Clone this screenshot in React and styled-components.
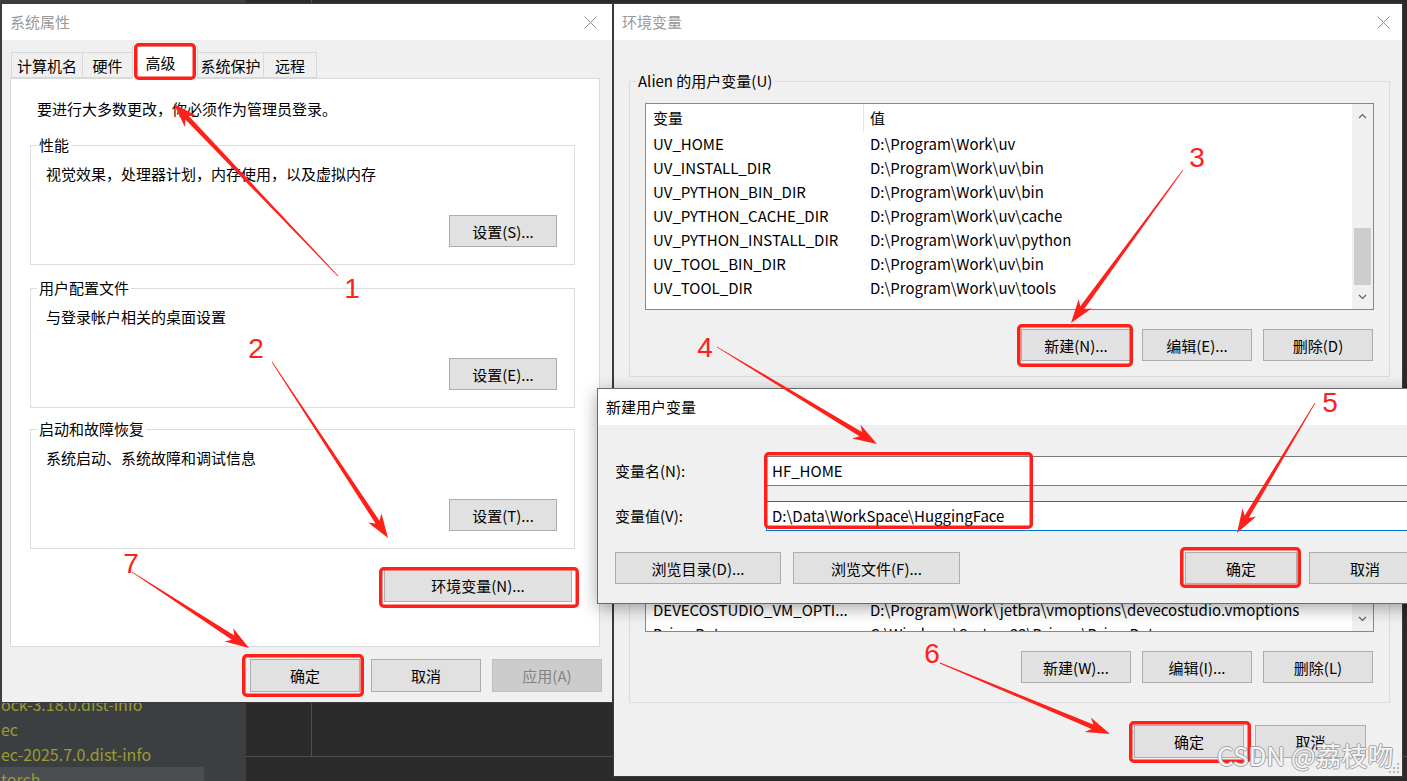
import React from 'react';
import styled, { createGlobalStyle } from 'styled-components';

const GlobalStyle = createGlobalStyle`
    html, body {
        margin: 0;
        padding: 0;
        background: #2b2b2b;
    }
    body {
        font-family: "Noto Sans CJK SC", "Noto Sans", sans-serif;
        font-size: 15px;
        color: #000;
    }
    * {
        box-sizing: border-box;
    }
`;

const Desktop = styled.div`
    position: relative;
    width: 1407px;
    height: 781px;
    overflow: hidden;
    background: #2b2b2b;
`;

/* ---------------- IDE behind the dialogs ---------------- */

const Ide = styled.div`
    position: absolute;
    inset: 0;
    display: grid;
    grid-template-columns: 246px 1fr;
`;

const ProjectTree = styled.div`
    background: #3c3f41;
    padding-top: 692px;
    display: flex;
    flex-direction: column;
    overflow: hidden;
`;

const TreeRow = styled.div`
    height: 25px;
    line-height: 25px;
    width: ${(p) => (p.$selected ? '204px' : 'auto')};
    background: ${(p) => (p.$selected ? '#4b4e50' : 'transparent')};
    color: #9b9b30;
    font-size: 16px;
    white-space: nowrap;
    padding-left: 1px;
    flex-shrink: 0;
`;

const Editor = styled.div`
    display: flex;
    flex-direction: column;
    background: #2b2b2b;
`;

const EditorTop = styled.div`
    height: 756px;
    display: flex;
`;

const Gutter = styled.div`
    width: 66px;
    border-right: 1px solid #4f4f4f;
`;

const EditorBottom = styled.div`
    flex: 1;
    border-top: 1px solid #4f4f4f;
`;

/* ---------------- generic window parts ---------------- */

const Window = styled.div`
    position: absolute;
    left: ${(p) => p.$x}px;
    top: ${(p) => p.$y}px;
    width: ${(p) => p.$w}px;
    height: ${(p) => p.$h}px;
    background: #f0f0f0;
    border: 1px solid ${(p) => (p.$active ? '#6a6a6a' : '#3a3a3a')};
    box-shadow: ${(p) => (p.$active ? '0 4px 16px rgba(0, 0, 0, 0.35)' : 'none')};
    display: flex;
    flex-direction: column;
    overflow: hidden;
`;

const TitleBar = styled.div`
    height: 36px;
    flex-shrink: 0;
    background: #fff;
    display: flex;
    align-items: center;
    justify-content: space-between;
    padding: 0 ${(p) => p.$pr || 14}px 0 8px;
    color: ${(p) => (p.$active ? '#000' : '#999')};
    line-height: 20px;
`;

const Body = styled.div`
    flex: 1;
    display: flex;
    flex-direction: column;
    padding: ${(p) => p.$pad};
`;

const ButtonRow = styled.div`
    display: flex;
    justify-content: flex-end;
    gap: ${(p) => p.$gap || 11}px;
    margin-top: ${(p) => p.$mt || 0}px;
    margin-right: ${(p) => p.$mr || 0}px;
`;

const Button = styled.button`
    width: ${(p) => p.$w}px;
    height: ${(p) => p.$h || 32}px;
    flex-shrink: 0;
    padding: 0;
    background: #e1e1e1;
    border: 1px solid #adadad;
    font-family: inherit;
    font-size: 15px;
    color: #000;

    &:disabled {
        background: #cccccc;
        border-color: #bfbfbf;
        color: #838383;
    }
`;

const Group = styled.fieldset`
    margin: ${(p) => p.$mt || 0}px 0 0 0;
    min-width: 0;
    border: 1px solid #dcdcdc;
    padding: ${(p) => p.$pad};
    display: flex;
    flex-direction: column;
`;

const Legend = styled.legend`
    padding: 0 2px;
    margin-left: -9px;
    line-height: 20px;
`;

const Line = styled.div`
    line-height: 20px;
    margin-left: ${(p) => p.$ml || 0}px;
    white-space: nowrap;
`;

const SizeGrip = styled.svg`
    position: absolute;
    right: 2px;
    bottom: 2px;
`;

const CloseIcon = () => (
    <svg width="13" height="13" viewBox="0 0 13 13">
        <path d="M0.5 0.5L12.5 12.5M12.5 0.5L0.5 12.5" stroke="#8c8c8c" strokeWidth="1" />
    </svg>
);

const Grip = () => (
    <SizeGrip width="11" height="11" viewBox="0 0 11 11">
        {[
            [8, 0],
            [8, 4],
            [4, 4],
            [8, 8],
            [4, 8],
            [0, 8],
        ].map(([x, y]) => (
            <rect key={`${x}-${y}`} x={x} y={y} width="2" height="2" fill="#b8b8b8" />
        ))}
    </SizeGrip>
);

/* ---------------- system properties ---------------- */

const TabStrip = styled.div`
    height: 32px;
    display: flex;
    align-items: flex-end;
    padding-left: 1px;
`;

const Tab = styled.div`
    width: ${(p) => p.$w}px;
    height: ${(p) => (p.$active ? 33 : 26)}px;
    margin-left: -1px;
    margin-bottom: ${(p) => (p.$active ? -1 : 0)}px;
    border: 1px solid #d9d9d9;
    border-bottom: ${(p) => (p.$active ? 'none' : '1px solid #d9d9d9')};
    background: ${(p) => (p.$active ? '#fff' : '#f0f0f0')};
    position: relative;
    z-index: ${(p) => (p.$active ? 2 : 1)};
    display: flex;
    align-items: center;
    justify-content: center;
    padding-bottom: ${(p) => (p.$active ? 2 : 0)}px;
    padding-right: ${(p) => (p.$active ? 9 : 0)}px;
    padding-left: ${(p) => (p.$active ? 0 : 0)}px;
    white-space: nowrap;

    &:first-child {
        margin-left: 0;
    }
`;

const TabPanel = styled.div`
    width: 590px;
    height: 569px;
    background: #fff;
    border: 1px solid #d9d9d9;
    padding: 20px 24px 0 19px;
    display: flex;
    flex-direction: column;
`;

/* ---------------- environment variables ---------------- */

const ListBox = styled.div`
    height: 207px;
    border: 1px solid #828790;
    background: #fff;
    display: flex;
`;

const ListMain = styled.div`
    flex: 1;
    min-width: 0;
    display: flex;
    flex-direction: column;
    overflow: hidden;
`;

const ListLine = styled.div`
    display: grid;
    grid-template-columns: 218px 1fr;
    height: ${(p) => (p.$head ? 28 : 24)}px;
    line-height: ${(p) => (p.$head ? 28 : 24)}px;
    flex-shrink: 0;
`;

const Cell = styled.div`
    padding-left: ${(p) => (p.$first ? 7 : 6)}px;
    white-space: nowrap;
    overflow: hidden;
    text-overflow: ellipsis;
    border-right: ${(p) => (p.$sep ? '1px solid #e5e5e5' : 'none')};
`;

const ScrollBar = styled.div`
    width: 21px;
    background: #f0f0f0;
    display: flex;
    flex-direction: column;
`;

const ScrollArrow = styled.div`
    height: 24px;
    display: flex;
    align-items: center;
    justify-content: center;
`;

const Track = styled.div`
    flex: 1;
    display: flex;
    flex-direction: column;
    justify-content: ${(p) => p.$at};
`;

const Thumb = styled.div`
    height: 57px;
    margin: 0 2px;
    background: #cdcdcd;
`;

const Chevron = ({ up }) => (
    <svg width="9" height="6" viewBox="0 0 9 6">
        <path d={up ? 'M1 5L4.5 1.5L8 5' : 'M1 1L4.5 4.5L8 1'} stroke="#606060" strokeWidth="1.2" fill="none" />
    </svg>
);

const VarList = ({ rows, thumbAt }) => (
    <ListBox>
        <ListMain>
            <ListLine $head>
                <Cell $first $sep>变量</Cell>
                <Cell>值</Cell>
            </ListLine>
            {rows.map(([name, value]) => (
                <ListLine key={name}>
                    <Cell $first>{name}</Cell>
                    <Cell>{value}</Cell>
                </ListLine>
            ))}
        </ListMain>
        <ScrollBar>
            <ScrollArrow>
                <Chevron up />
            </ScrollArrow>
            <Track $at={thumbAt}>
                <Thumb />
            </Track>
            <ScrollArrow>
                <Chevron />
            </ScrollArrow>
        </ScrollBar>
    </ListBox>
);

const userVars = [
    ['UV_HOME', 'D:\\Program\\Work\\uv'],
    ['UV_INSTALL_DIR', 'D:\\Program\\Work\\uv\\bin'],
    ['UV_PYTHON_BIN_DIR', 'D:\\Program\\Work\\uv\\bin'],
    ['UV_PYTHON_CACHE_DIR', 'D:\\Program\\Work\\uv\\cache'],
    ['UV_PYTHON_INSTALL_DIR', 'D:\\Program\\Work\\uv\\python'],
    ['UV_TOOL_BIN_DIR', 'D:\\Program\\Work\\uv\\bin'],
    ['UV_TOOL_DIR', 'D:\\Program\\Work\\uv\\tools'],
];

const systemVars = [
    ['CLION_VM_OPTIONS', 'D:\\Program\\Work\\jetbra\\vmoptions\\clion.vmoptions'],
    ['ComSpec', 'C:\\WINDOWS\\system32\\cmd.exe'],
    ['DATAGRIP_VM_OPTIONS', 'D:\\Program\\Work\\jetbra\\vmoptions\\datagrip.vmoptions'],
    ['DATASPELL_VM_OPTIONS', 'D:\\Program\\Work\\jetbra\\vmoptions\\dataspell.vmoptions'],
    ['DEVECO_SDK_HOME', 'D:\\Program\\Work\\DevEco Studio\\sdk'],
    ['DEVECOSTUDIO_JDK', 'D:\\Program\\Work\\DevEco Studio\\jbr'],
    ['DEVECOSTUDIO_VM_OPTI...', 'D:\\Program\\Work\\jetbra\\vmoptions\\devecostudio.vmoptions'],
    ['DriverData', 'C:\\Windows\\System32\\Drivers\\DriverData'],
];

/* ---------------- new user variable ---------------- */

const FieldGrid = styled.div`
    display: grid;
    grid-template-columns: 151px 1fr;
    row-gap: 15px;
    align-items: center;
`;

const TextInput = styled.div`
    height: 30px;
    background: #fff;
    border: 1px solid ${(p) => (p.$focused ? '#0078d7' : '#7a7a7a')};
    padding-left: 5px;
    line-height: 28px;
    white-space: nowrap;
`;

const DialogActions = styled.div`
    display: flex;
    gap: 12px;
    margin-top: 21px;
`;

const Spacer = styled.div`
    flex: 1;
`;

/* ---------------- annotations ---------------- */

const Overlay = styled.svg`
    position: absolute;
    left: 0;
    top: 0;
    pointer-events: none;
    z-index: 10;
`;

const Watermark = styled.div`
    position: absolute;
    left: 1217px;
    top: 738px;
    z-index: 11;
    font-size: 26px;
    line-height: 34px;
    color: rgba(255, 255, 255, 0.92);
    text-shadow: 1px 0 #a3a3a3, -1px 0 #a3a3a3, 0 1px #a3a3a3, 0 -1px #a3a3a3;
    white-space: nowrap;
`;

const RED = '#ff2019';

const arrowPoints = ([x1, y1], [x2, y2]) => {
    const dx = x2 - x1;
    const dy = y2 - y1;
    const len = Math.hypot(dx, dy);
    const ux = dx / len;
    const uy = dy / len;
    const px = -uy;
    const py = ux;
    const head = 24;
    const barb = 8;
    const neck = 2.4;
    const notch = 5;
    const tail = 0.4;
    const hx = x2 - ux * head;
    const hy = y2 - uy * head;
    const nx = x2 - ux * (head - notch);
    const ny = y2 - uy * (head - notch);
    const pts = [
        [x1 + px * tail, y1 + py * tail],
        [nx + px * neck, ny + py * neck],
        [hx + px * barb, hy + py * barb],
        [x2, y2],
        [hx - px * barb, hy - py * barb],
        [nx - px * neck, ny - py * neck],
        [x1 - px * tail, y1 - py * tail],
    ];
    return pts.map((p) => p.map((v) => v.toFixed(1)).join(',')).join(' ');
};

const arrows = [
    [[338, 276], [174, 104]],
    [[272, 362], [388, 538]],
    [[1183, 170], [1071, 323]],
    [[717, 347], [877, 444]],
    [[1315, 403], [1237, 533]],
    [[940, 663], [1110, 734]],
    [[132, 572], [249, 648]],
];

const labels = [
    ['1', 352, 288],
    ['2', 256, 348],
    ['3', 1197, 157],
    ['4', 705, 347],
    ['5', 1330, 402],
    ['6', 932, 653],
    ['7', 131, 563],
];

const boxes = [
    [134, 43, 196, 80],
    [379, 567, 579, 608],
    [242, 654, 364, 697],
    [1017, 324, 1133, 367],
    [764, 452, 1033, 529],
    [1180, 547, 1301, 588],
    [1129, 721, 1251, 763],
];

const Annotations = () => (
    <Overlay width="1407" height="781" viewBox="0 0 1407 781">
        {boxes.map(([x1, y1, x2, y2], i) => (
            <rect
                key={i}
                x={x1 + 1.75}
                y={y1 + 1.75}
                width={x2 - x1 - 3.5}
                height={y2 - y1 - 3.5}
                rx="3"
                fill="none"
                stroke={RED}
                strokeWidth="3.5"
            />
        ))}
        {arrows.map(([from, to], i) => (
            <polygon key={i} points={arrowPoints(from, to)} fill={RED} />
        ))}
        {labels.map(([t, x, y]) => (
            <text
                key={t}
                x={x}
                y={y}
                fill={RED}
                fontSize="28"
                fontFamily='"Liberation Sans", sans-serif'
                textAnchor="middle"
                dominantBaseline="central"
            >
                {t}
            </text>
        ))}
    </Overlay>
);

/* ---------------- page ---------------- */

const tabs = [
    ['计算机名', 72],
    ['硬件', 51],
    ['高级', 66],
    ['系统保护', 67],
    ['远程', 54],
];

const App = () => {
    return (
        <>
            <GlobalStyle />
            <Desktop>
                <Ide>
                    <ProjectTree>
                        <TreeRow>ock-3.18.0.dist-info</TreeRow>
                        <TreeRow>ec</TreeRow>
                        <TreeRow>ec-2025.7.0.dist-info</TreeRow>
                        <TreeRow $selected>torch</TreeRow>
                    </ProjectTree>
                    <Editor>
                        <EditorTop>
                            <Gutter />
                        </EditorTop>
                        <EditorBottom />
                    </Editor>
                </Ide>

                <Window $x={1} $y={3} $w={612} $h={700}>
                    <TitleBar $pr={15}>
                        <span>系统属性</span>
                        <CloseIcon />
                    </TitleBar>
                    <Body $pad="6px 10px 0 8px">
                        <TabStrip>
                            {tabs.map(([name, w]) => (
                                <Tab key={name} $w={w} $active={name === '高级'}>
                                    {name}
                                </Tab>
                            ))}
                        </TabStrip>
                        <TabPanel>
                            <Line $ml={7}>要进行大多数更改，你必须作为管理员登录。</Line>

                            <Group $mt={16} $pad="9px 17px 17px 15px">
                                <Legend>性能</Legend>
                                <Line>视觉效果，处理器计划，内存使用，以及虚拟内存</Line>
                                <ButtonRow $mt={31}>
                                    <Button $w={108}>设置(S)...</Button>
                                </ButtonRow>
                            </Group>

                            <Group $mt={13} $pad="9px 17px 17px 15px">
                                <Legend>用户配置文件</Legend>
                                <Line>与登录帐户相关的桌面设置</Line>
                                <ButtonRow $mt={31}>
                                    <Button $w={108}>设置(E)...</Button>
                                </ButtonRow>
                            </Group>

                            <Group $mt={11} $pad="9px 17px 17px 15px">
                                <Legend>启动和故障恢复</Legend>
                                <Line>系统启动、系统故障和调试信息</Line>
                                <ButtonRow $mt={31}>
                                    <Button $w={108}>设置(T)...</Button>
                                </ButtonRow>
                            </Group>

                            <ButtonRow $mt={20} $mr={3}>
                                <Button $w={188} $h={33}>环境变量(N)...</Button>
                            </ButtonRow>
                        </TabPanel>
                        <ButtonRow $mt={12}>
                            <Button $w={110} $h={33}>确定</Button>
                            <Button $w={110} $h={33}>取消</Button>
                            <Button $w={110} $h={33} disabled>应用(A)</Button>
                        </ButtonRow>
                    </Body>
                </Window>

                <Window $x={613} $y={3} $w={790} $h={774}>
                    <TitleBar $pr={12}>
                        <span>环境变量</span>
                        <CloseIcon />
                    </TitleBar>
                    <Body $pad="31px 12px 0 15px">
                        <Group $pad="12px 15px 15px 15px">
                            <Legend>Alien 的用户变量(U)</Legend>
                            <VarList rows={userVars} thumbAt="flex-end" />
                            <ButtonRow $mt={19} $mr={1}>
                                <Button $w={110}>新建(N)...</Button>
                                <Button $w={110}>编辑(E)...</Button>
                                <Button $w={110}>删除(D)</Button>
                            </ButtonRow>
                        </Group>

                        <Group $mt={16} $pad="12px 15px 19px 15px">
                            <Legend>系统变量(S)</Legend>
                            <VarList rows={systemVars} thumbAt="flex-start" />
                            <ButtonRow $mt={19} $mr={1}>
                                <Button $w={110}>新建(W)...</Button>
                                <Button $w={110}>编辑(I)...</Button>
                                <Button $w={110}>删除(L)</Button>
                            </ButtonRow>
                        </Group>

                        <ButtonRow $mt={22} $mr={24}>
                            <Button $w={110} $h={33}>确定</Button>
                            <Button $w={111} $h={33}>取消</Button>
                        </ButtonRow>
                    </Body>
                    <Grip />
                </Window>

                <Window $x={597} $y={388} $w={836} $h={216} $active>
                    <TitleBar $active>
                        <span>新建用户变量</span>
                    </TitleBar>
                    <Body $pad="31px 11px 0 17px">
                        <FieldGrid>
                            <Line>变量名(N):</Line>
                            <TextInput>HF_HOME</TextInput>
                            <Line>变量值(V):</Line>
                            <TextInput $focused>D:\Data\WorkSpace\HuggingFace</TextInput>
                        </FieldGrid>
                        <DialogActions>
                            <Button $w={166}>浏览目录(D)...</Button>
                            <Button $w={167}>浏览文件(F)...</Button>
                            <Spacer />
                            <Button $w={112}>确定</Button>
                            <Button $w={112}>取消</Button>
                        </DialogActions>
                    </Body>
                </Window>

                <Annotations />
                <Watermark>CSDN @荔枝吻</Watermark>
            </Desktop>
        </>
    );
};

export default App;
